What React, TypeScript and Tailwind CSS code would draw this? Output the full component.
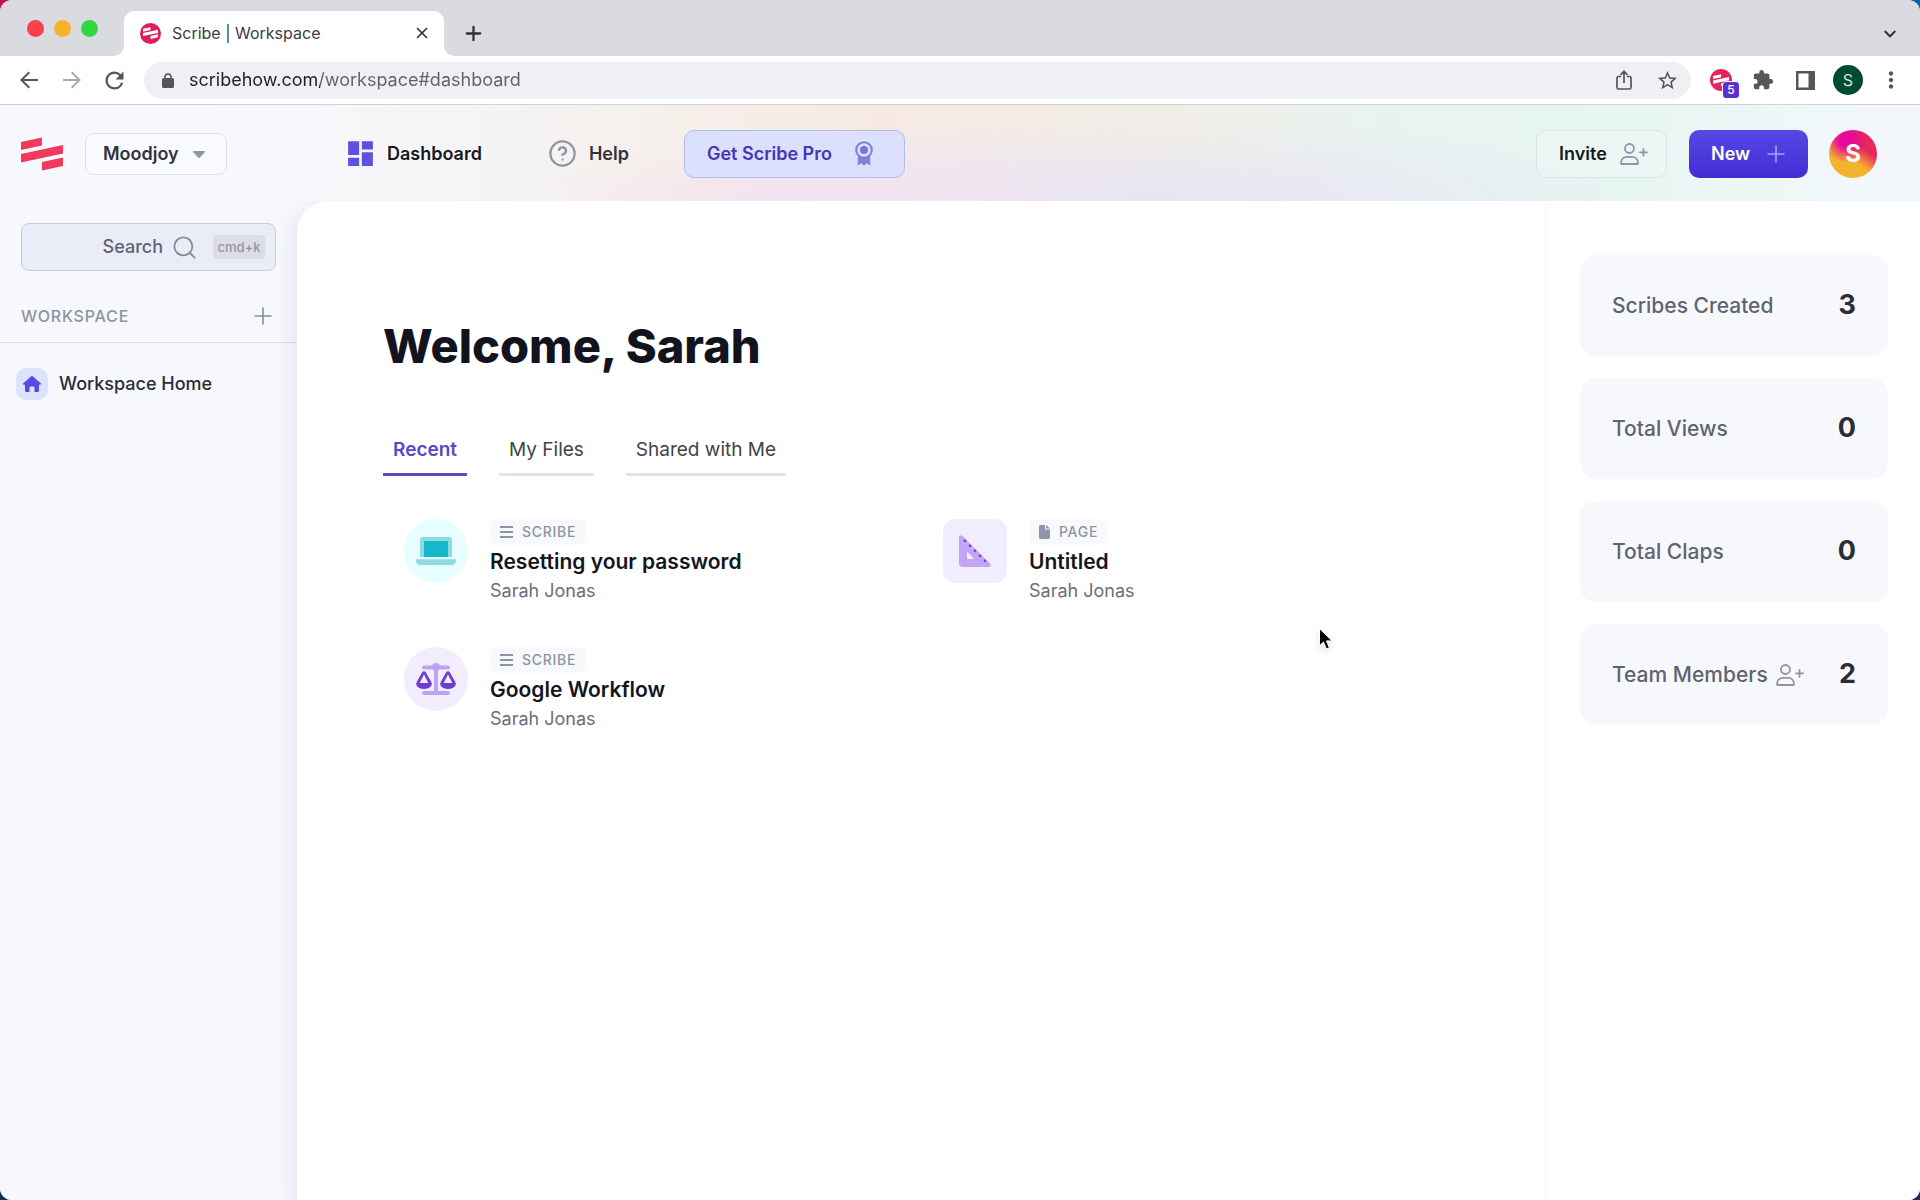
import { CircleHelp, Plus, Search, X } from "lucide-react";
import { MdDashboard, MdExtension, MdMoreVert, MdRefresh, MdStarBorder } from "react-icons/md";

type Kind = "scribe" | "page";

interface Doc {
  title: string;
  author: string;
  kind: Kind;
  icon: React.ReactNode;
}

interface Stat {
  label: string;
  value: number;
  invite?: boolean;
}

function ScribeMark({ className }: { className?: string }) {
  return (
    <svg viewBox="0 0 42 34" className={className} fill="currentColor" aria-hidden="true">
      <path d="M0 5 21 .5v8L0 13zM0 17 42 8v8.5L0 25.5zM21 25l21-4.5V29l-21 4.5z" />
    </svg>
  );
}

function UserPlusIcon({ className }: { className?: string }) {
  return (
    <svg viewBox="0 0 28 22" className={className} fill="none" stroke="currentColor" strokeWidth="1.8" aria-hidden="true">
      <circle cx="9.500" cy="5.500" r="4.500" />
      <path d="M1 20.200c0-4 2.800-6.400 6-6.400h5c3.200 0 6 2.400 6 6.400 0 .5-.3.800-.8.800H1.800c-.5 0-.8-.3-.8-.8z" />
      <path d="M23.500 5.800v7M20 9.300h7" strokeLinecap="round" />
    </svg>
  );
}

function LaptopIcon() {
  return (
    <svg viewBox="0 0 40 28" className="w-10" aria-hidden="true">
      <path d="M4 3a3 3 0 0 1 3-3h26a3 3 0 0 1 3 3v17H4z" fill="#8ddce0" />
      <path d="M8 4h24v16H8z" fill="#14b8c9" />
      <path d="M0 23.500c0-.8.500-1.300 1.300-1.300h37.400c.8 0 1.300.500 1.300 1.300A4.500 4.500 0 0 1 35.500 28h-31A4.500 4.500 0 0 1 0 23.500z" fill="#8fd9df" />
    </svg>
  );
}

function ScalesIcon() {
  return (
    <svg viewBox="0 0 40 32" className="w-10" aria-hidden="true">
      <g fill="#bda4f3">
        <rect x="6" y="2.500" width="28" height="4" rx="2" />
        <circle cx="20" cy="4" r="4" />
        <rect x="18" y="4" width="4" height="26" />
        <rect x="6" y="28" width="28" height="4" rx="2" />
      </g>
      <g fill="#6d3fd1" fillRule="evenodd">
        <path d="M6.200 9.200c.8-1.400 2.800-1.400 3.600 0l5.200 9.300c.7 1.200 1 2.400.6 3.400C14.600 24.300 11.600 26 8 26S1.400 24.300.4 21.900c-.4-1-.1-2.200.6-3.400zM8 11.500 3.700 20h8.600z" />
        <path d="M30.200 9.200c.8-1.400 2.800-1.400 3.600 0l5.200 9.300c.7 1.200 1 2.400.6 3.400-1 2.400-4 4.100-7.600 4.100s-6.600-1.700-7.600-4.100c-.4-1-.1-2.200.6-3.400zM32 11.500 27.700 20h8.600z" />
      </g>
    </svg>
  );
}

function TriangleIcon() {
  return (
    <svg viewBox="0 0 32 32" className="w-8" aria-hidden="true">
      <path
        d="M0 2C0 .3 2-.5 3.200.7l28 28c1.300 1.200.4 3.300-1.300 3.300H4a4 4 0 0 1-4-4zm8 14.500V24h7.500z"
        fill="#c3a5f6"
        fillRule="evenodd"
      />
      <g fill="#7443cf">
        <circle cx="6" cy="5.800" r="1.400" />
        <circle cx="11" cy="10.800" r="1.400" />
        <circle cx="16" cy="15.800" r="1.400" />
        <circle cx="21" cy="20.800" r="1.400" />
        <circle cx="26" cy="25.800" r="1.400" />
      </g>
    </svg>
  );
}

const docs: Doc[] = [
  { title: "Resetting your password", author: "Sarah Jonas", kind: "scribe", icon: <LaptopIcon /> },
  { title: "Untitled", author: "Sarah Jonas", kind: "page", icon: <TriangleIcon /> },
  { title: "Google Workflow", author: "Sarah Jonas", kind: "scribe", icon: <ScalesIcon /> },
];

const iconStyles = [
  "rounded-full bg-[#e6fffe]",
  "rounded-xl bg-[#f2edfd]",
  "rounded-full bg-[#f2edfd]",
];

const stats: Stat[] = [
  { label: "Scribes Created", value: 3 },
  { label: "Total Views", value: 0 },
  { label: "Total Claps", value: 0 },
  { label: "Team Members", value: 2, invite: true },
];

const tabs = ["Recent", "My Files", "Shared with Me"];

function TabStrip() {
  return (
    <div className="flex h-14 items-end bg-[#dadbe0]">
      <div className="flex h-14 w-[124px] items-center gap-[10px] pl-[27px]">
        <span className="size-[17px] rounded-full bg-[#f9414d]" />
        <span className="size-[17px] rounded-full bg-[#f4b32a]" />
        <span className="size-[17px] rounded-full bg-[#2fd63f]" />
      </div>
      <div className="relative flex h-[45px] w-80 items-center rounded-t-[10px] bg-white pr-3 pb-px pl-4">
        <svg viewBox="0 0 10 10" className="absolute bottom-0 -left-2.5 size-2.5 fill-white" aria-hidden="true">
          <path d="M10 0v10H0A10 10 0 0 0 10 0z" />
        </svg>
        <svg viewBox="0 0 10 10" className="absolute -right-2.5 bottom-0 size-2.5 fill-white" aria-hidden="true">
          <path d="M0 0v10h10A10 10 0 0 1 0 0z" />
        </svg>
        <span className="flex size-[21px] items-center justify-center rounded-full bg-[#e01e5a]">
          <ScribeMark className="w-[15px] text-white" />
        </span>
        <span className="ml-[11px] flex-1 text-base text-[#3c4043]">Scribe | Workspace</span>
        <button aria-label="Close tab" className="flex size-5 items-center justify-center text-[#303236]">
          <X size={18} strokeWidth={2.2} />
        </button>
      </div>
      <button aria-label="New tab" className="ml-[18px] flex h-[45px] items-center text-[#303236]">
        <Plus size={23} strokeWidth={2.4} />
      </button>
      <button aria-label="Search tabs" className="mr-6 ml-auto flex h-[45px] items-center text-[#303236]">
        <svg viewBox="0 0 12 8" className="w-3" fill="none" stroke="currentColor" strokeWidth="2" aria-hidden="true">
          <path d="m.7 1 5.300 5.400L11.300 1" />
        </svg>
      </button>
    </div>
  );
}

function Toolbar() {
  return (
    <div className="flex h-[49px] items-center border-b border-[#cfd1d5] bg-white pr-4 pl-5 text-[#54565a]">
      <button aria-label="Back">
        <svg viewBox="0 0 18 18" className="w-[18px]" fill="none" stroke="currentColor" strokeWidth="2" aria-hidden="true">
          <path d="M18 9H1.500M9.300 1.200 1.500 9l7.800 7.800" />
        </svg>
      </button>
      <button aria-label="Forward" className="ml-[25px] text-[#a9abaf]">
        <svg viewBox="0 0 18 18" className="w-[18px]" fill="none" stroke="currentColor" strokeWidth="2" aria-hidden="true">
          <path d="M0 9h16.500M8.700 1.200 16.500 9l-7.800 7.800" />
        </svg>
      </button>
      <button aria-label="Reload" className="ml-5">
        <MdRefresh size={27} />
      </button>
      <div className="ml-4 flex h-[37px] flex-1 items-center rounded-full bg-[#eff0f3] pr-3 pl-[18px]">
        <svg viewBox="0 0 12 15" className="w-3" aria-hidden="true">
          <rect y="5" width="12" height="10" rx="1.500" fill="currentColor" />
          <path d="M3 6V4a3 3 0 0 1 6 0v2" fill="none" stroke="currentColor" strokeWidth="1.600" />
        </svg>
        <input
          aria-label="Address"
          defaultValue="scribehow.com/workspace#dashboard"
          className="ml-[15px] min-w-0 flex-1 bg-[linear-gradient(90deg,#202124_131px,#5f6368_131px)] bg-clip-text text-lg text-transparent outline-none"
        />
        <button aria-label="Share">
          <svg viewBox="0 0 16 20" className="w-4" fill="none" stroke="currentColor" strokeWidth="1.700" aria-hidden="true">
            <path d="M5 6.500H2.500a1.500 1.500 0 0 0-1.500 1.500v9.500A1.500 1.500 0 0 0 2.500 19h11a1.500 1.500 0 0 0 1.500-1.500V8a1.500 1.500 0 0 0-1.500-1.500H11M8 13V1.500M4.500 4.800 8 1.300l3.500 3.500" />
          </svg>
        </button>
        <button aria-label="Bookmark" className="ml-6">
          <MdStarBorder size={23} />
        </button>
      </div>
      <button aria-label="Scribe extension" className="relative ml-[19px] flex size-[22px] items-center justify-center rounded-full bg-[#e5265e]">
        <ScribeMark className="w-4 text-white" />
        <span className="absolute top-3 left-3 flex size-[18px] items-center justify-center rounded-sm border border-white bg-[#5b2fd0] text-xs font-medium text-white">
          5
        </span>
      </button>
      <button aria-label="Extensions" className="ml-5">
        <MdExtension size={22} />
      </button>
      <button aria-label="Side panel" className="ml-[22px]">
        <svg viewBox="0 0 19 19" className="w-[19px]" aria-hidden="true">
          <path d="M0 0h19v19H0zm2.500 2.500v14h10v-14z" fill="currentColor" fillRule="evenodd" />
        </svg>
      </button>
      <button aria-label="Profile" className="ml-[18px] flex size-[30px] items-center justify-center rounded-full bg-[#024a32] text-base text-[#cfe5dc]">
        S
      </button>
      <button aria-label="Menu" className="ml-[15px]">
        <MdMoreVert size={26} />
      </button>
    </div>
  );
}

function Header() {
  return (
    <header className="relative z-10 flex h-24 items-center bg-[radial-gradient(ellipse_300px_60px_at_42%_100%,#f3e3f1_0%,#f3e3f100_100%),radial-gradient(ellipse_520px_80px_at_60%_100%,#e8e4f4_0%,#e8e4f400_100%),linear-gradient(90deg,#f7f9fe_10%,#f5f4f4_26%,#f5f0eb_34%,#f6e9e5_46%,#f0eee7_62%,#e8f3f0_72%,#e6f6f1_84%,#f3f7fc_98%)] pt-px pr-[43px] pl-[21px] text-lg font-semibold text-[#16171f]">
      <a href="#dashboard" aria-label="Scribe">
        <ScribeMark className="w-[42px] text-[#ef3a5d]" />
      </a>
      <div className="relative ml-[22px] w-[142px]">
        <select aria-label="Team" className="h-[42px] w-full appearance-none rounded-lg border border-[#e0e2e9] bg-[#f9fafe] pl-[17px] text-[#31333d]">
          <option>Moodjoy</option>
        </select>
        <svg viewBox="0 0 12 7" className="pointer-events-none absolute top-[18px] right-[22px] w-3 fill-[#8f94ab]" aria-hidden="true">
          <path d="M.8 0h10.400c.7 0 1 .8.500 1.300L6.900 6.500a1.200 1.200 0 0 1-1.800 0L.3 1.300C-.2.8.1 0 .8 0z" />
        </svg>
      </div>
      <nav className="ml-[117px] flex items-center">
        <a href="#dashboard" className="flex items-center gap-[10px]">
          <MdDashboard size={33} className="text-[#5d50e2]" />
          Dashboard
        </a>
        <a href="#help" className="ml-[66px] flex items-center gap-3 text-[#31333d]">
          <CircleHelp size={29} strokeWidth={1.9} className="text-[#8f94a3]" />
          Help
        </a>
      </nav>
      <button className="ml-[55px] flex h-12 w-[221px] items-center justify-between rounded-[10px] border border-[#b3bddd] bg-[#dae0fd] pr-[31px] pl-[22px] text-[#4735b5]">
        Get Scribe Pro
        <svg viewBox="0 0 18 25" className="w-[18px]" aria-hidden="true">
          <path d="m3 15-.5 9.500 3.700-2.200L9 24.500l2.800-2.200 3.700 2.200L15 15z" fill="#7f84d4" />
          <circle cx="9" cy="9" r="7.800" fill="#dae0fd" stroke="#7b80d2" strokeWidth="2" />
          <circle cx="9" cy="9" r="4" fill="#7276d6" />
        </svg>
      </button>
      <button className="ml-auto flex h-12 w-[131px] items-center justify-between rounded-[10px] border border-[#d8e3e5] bg-white/20 pr-[18px] pl-[22px]">
        Invite
        <UserPlusIcon className="w-7 text-[#8b98a8]" />
      </button>
      <button className="ml-[22px] flex h-12 w-[119px] items-center justify-between rounded-[10px] bg-linear-to-b from-[#5548e4] to-[#442bd4] pr-[23px] pl-[22px] text-white">
        New
        <svg viewBox="0 0 18 18" className="w-[18px]" stroke="#a8a1f2" strokeWidth="1.600" aria-hidden="true">
          <path d="M9 .5v17M.5 9h17" />
        </svg>
      </button>
      <button aria-label="Account" className="ml-[21px] flex size-12 items-center justify-center rounded-full bg-[radial-gradient(circle_at_35%_22%,#e9089a_12%,#e9089a00_45%),linear-gradient(35deg,#f4b32e_42%,#e6285a_66%)] text-2xl font-bold text-white">
        S
      </button>
    </header>
  );
}

function Sidebar() {
  return (
    <aside className="w-[297px] shrink-0 pt-[22px]">
      <button className="mx-[21px] flex h-12 w-[255px] items-center justify-end rounded-lg border border-[#c9cbdc] bg-[#eaecf8] pr-[10px] text-lg font-medium text-[#5f6373]">
        Search
        <Search size={27} strokeWidth={1.6} className="ml-2 text-[#868b9a]" />
        <kbd className="ml-[15px] flex h-6 w-[52px] items-center justify-center rounded bg-[#dcdde9] font-[Inter,sans-serif] text-[13px] font-medium text-[#9296a5]">
          cmd+k
        </kbd>
      </button>
      <div className="mt-5 flex h-[52px] items-center justify-between border-b border-[#dfe1e8] pr-[25px] pb-[2px] pl-[21px]">
        <h2 className="text-base font-medium tracking-wider text-[#8d93a2]">WORKSPACE</h2>
        <button aria-label="Add to workspace">
          <svg viewBox="0 0 18 18" className="w-[18px]" stroke="#868c9c" strokeWidth="1.600" aria-hidden="true">
            <path d="M9 .5v17M.5 9h17" />
          </svg>
        </button>
      </div>
      <a href="#workspace" className="mt-[25px] ml-4 flex items-center gap-[11px] text-lg font-medium text-[#2b2d37]">
        <span className="flex size-8 items-center justify-center rounded-[10px] bg-[#dde2fd]">
          <svg viewBox="0 0 18 16" className="w-[18px] fill-[#5a4be0]" aria-hidden="true">
            <path d="M8.300.3a1 1 0 0 1 1.400 0l8 7c.6.6.2 1.500-.6 1.500H16v6a1.200 1.200 0 0 1-1.200 1.200H11.500v-4.500a1 1 0 0 0-1-1h-3a1 1 0 0 0-1 1V16H3.200A1.200 1.200 0 0 1 2 14.800v-6H.9C.1 8.800-.3 7.900.3 7.300z" />
          </svg>
        </span>
        Workspace Home
      </a>
    </aside>
  );
}

function KindTag({ kind }: { kind: Kind }) {
  return (
    <span className="flex h-[26px] items-center gap-[9px] rounded-lg bg-[#f8f9fd] px-[10px] text-sm font-medium tracking-wider text-[#8f94a5]">
      {kind === "scribe" ? (
        <svg viewBox="0 0 13 12" className="w-[13px]" stroke="currentColor" strokeWidth="1.900" aria-hidden="true">
          <path d="M0 1h13M0 6h13M0 11h13" />
        </svg>
      ) : (
        <svg viewBox="0 0 11 14" className="w-[11px] fill-[#8f94ad]" aria-hidden="true">
          <path d="M1.500 0H6v4.500h5v8a1.500 1.500 0 0 1-1.500 1.500h-8A1.500 1.500 0 0 1 0 12.500v-11A1.500 1.500 0 0 1 1.500 0zM7 0l4 3.600H7z" />
        </svg>
      )}
      {kind === "scribe" ? "SCRIBE" : "PAGE"}
    </span>
  );
}

function Dashboard() {
  return (
    <main className="min-w-0 flex-1 pt-[115px] pl-[86px]">
      <h1 className="text-[47px] leading-[60px] font-extrabold text-[#12131f]">Welcome, Sarah</h1>
      <div role="tablist" className="mt-[54px] flex gap-8 text-[19px]">
        {tabs.map((t, i) => (
          <button
            key={t}
            role="tab"
            aria-selected={i === 0}
            className={
              i === 0
                ? "h-[46px] border-b-3 border-[#5a49c8] px-[10px] pb-[3px] font-semibold text-[#5a49c8]"
                : "h-[46px] border-b-3 border-[#e2e3e7] px-[10px] pb-[3px] text-[#40434c]"
            }
          >
            {t}
          </button>
        ))}
      </div>
      <div className="mt-[43px] ml-[21px] grid max-w-[1078px] grid-cols-2 gap-y-10">
        {docs.map((d, i) => (
          <a key={d.title} href="#open" className="flex h-[88px] items-start gap-[22px]">
            <span className={`flex size-16 shrink-0 items-center justify-center ${iconStyles[i]}`}>{d.icon}</span>
            <span className="flex flex-col items-start">
              <KindTag kind={d.kind} />
              <span className="text-[21px] leading-[34px] font-semibold text-[#14151d]">{d.title}</span>
              <span className="text-lg leading-6 text-[#6a6e7b]">{d.author}</span>
            </span>
          </a>
        ))}
      </div>
    </main>
  );
}

function Stats() {
  return (
    <aside className="flex w-[374px] shrink-0 flex-col gap-[22px] border-l border-[#f8f8fa] pt-[54px] pr-8 pl-[33px]">
      {stats.map((s) => (
        <div key={s.label} className="flex h-[101px] items-center rounded-2xl bg-[#f7f8fc] px-8">
          <span className="text-[21px] font-medium text-[#5f6470]">{s.label}</span>
          {s.invite && <UserPlusIcon className="ml-2 w-7 text-[#9195a1]" />}
          <span className="ml-auto text-[27px] font-bold text-[#2a2d37]">{s.value}</span>
        </div>
      ))}
    </aside>
  );
}

export default function App() {
  return (
    <div className="min-h-screen bg-[radial-gradient(circle_at_0_0,#c2105c_200px,#c2105c00_400px),radial-gradient(circle_at_100%_0,#10609c_200px,#10609c00_400px),linear-gradient(90deg,#0d2f57_40%,#2b2550_90%)] font-[Inter,sans-serif]">
      <div className="relative flex min-h-screen flex-col overflow-hidden rounded-xl bg-[#f7f8fd]">
        <TabStrip />
        <Toolbar />
        <Header />
        <div className="flex flex-1 bg-linear-to-r from-[#f7f8fd] from-50% to-white to-50%">
          <Sidebar />
          <div className="flex flex-1 rounded-tl-[32px] bg-white shadow-[-2px_6px_24px_#1e1e3018]">
            <Dashboard />
            <Stats />
          </div>
        </div>
        <svg viewBox="0 0 16 24" className="pointer-events-none absolute top-[627px] left-[1318px] w-4 drop-shadow-md" aria-hidden="true">
          <path d="M1.500 1.500v17.300l4-3.800 2.900 7 3-1.300-2.900-6.800h5.700z" fill="#000" stroke="#fff" strokeWidth="1" />
        </svg>
      </div>
    </div>
  );
}
